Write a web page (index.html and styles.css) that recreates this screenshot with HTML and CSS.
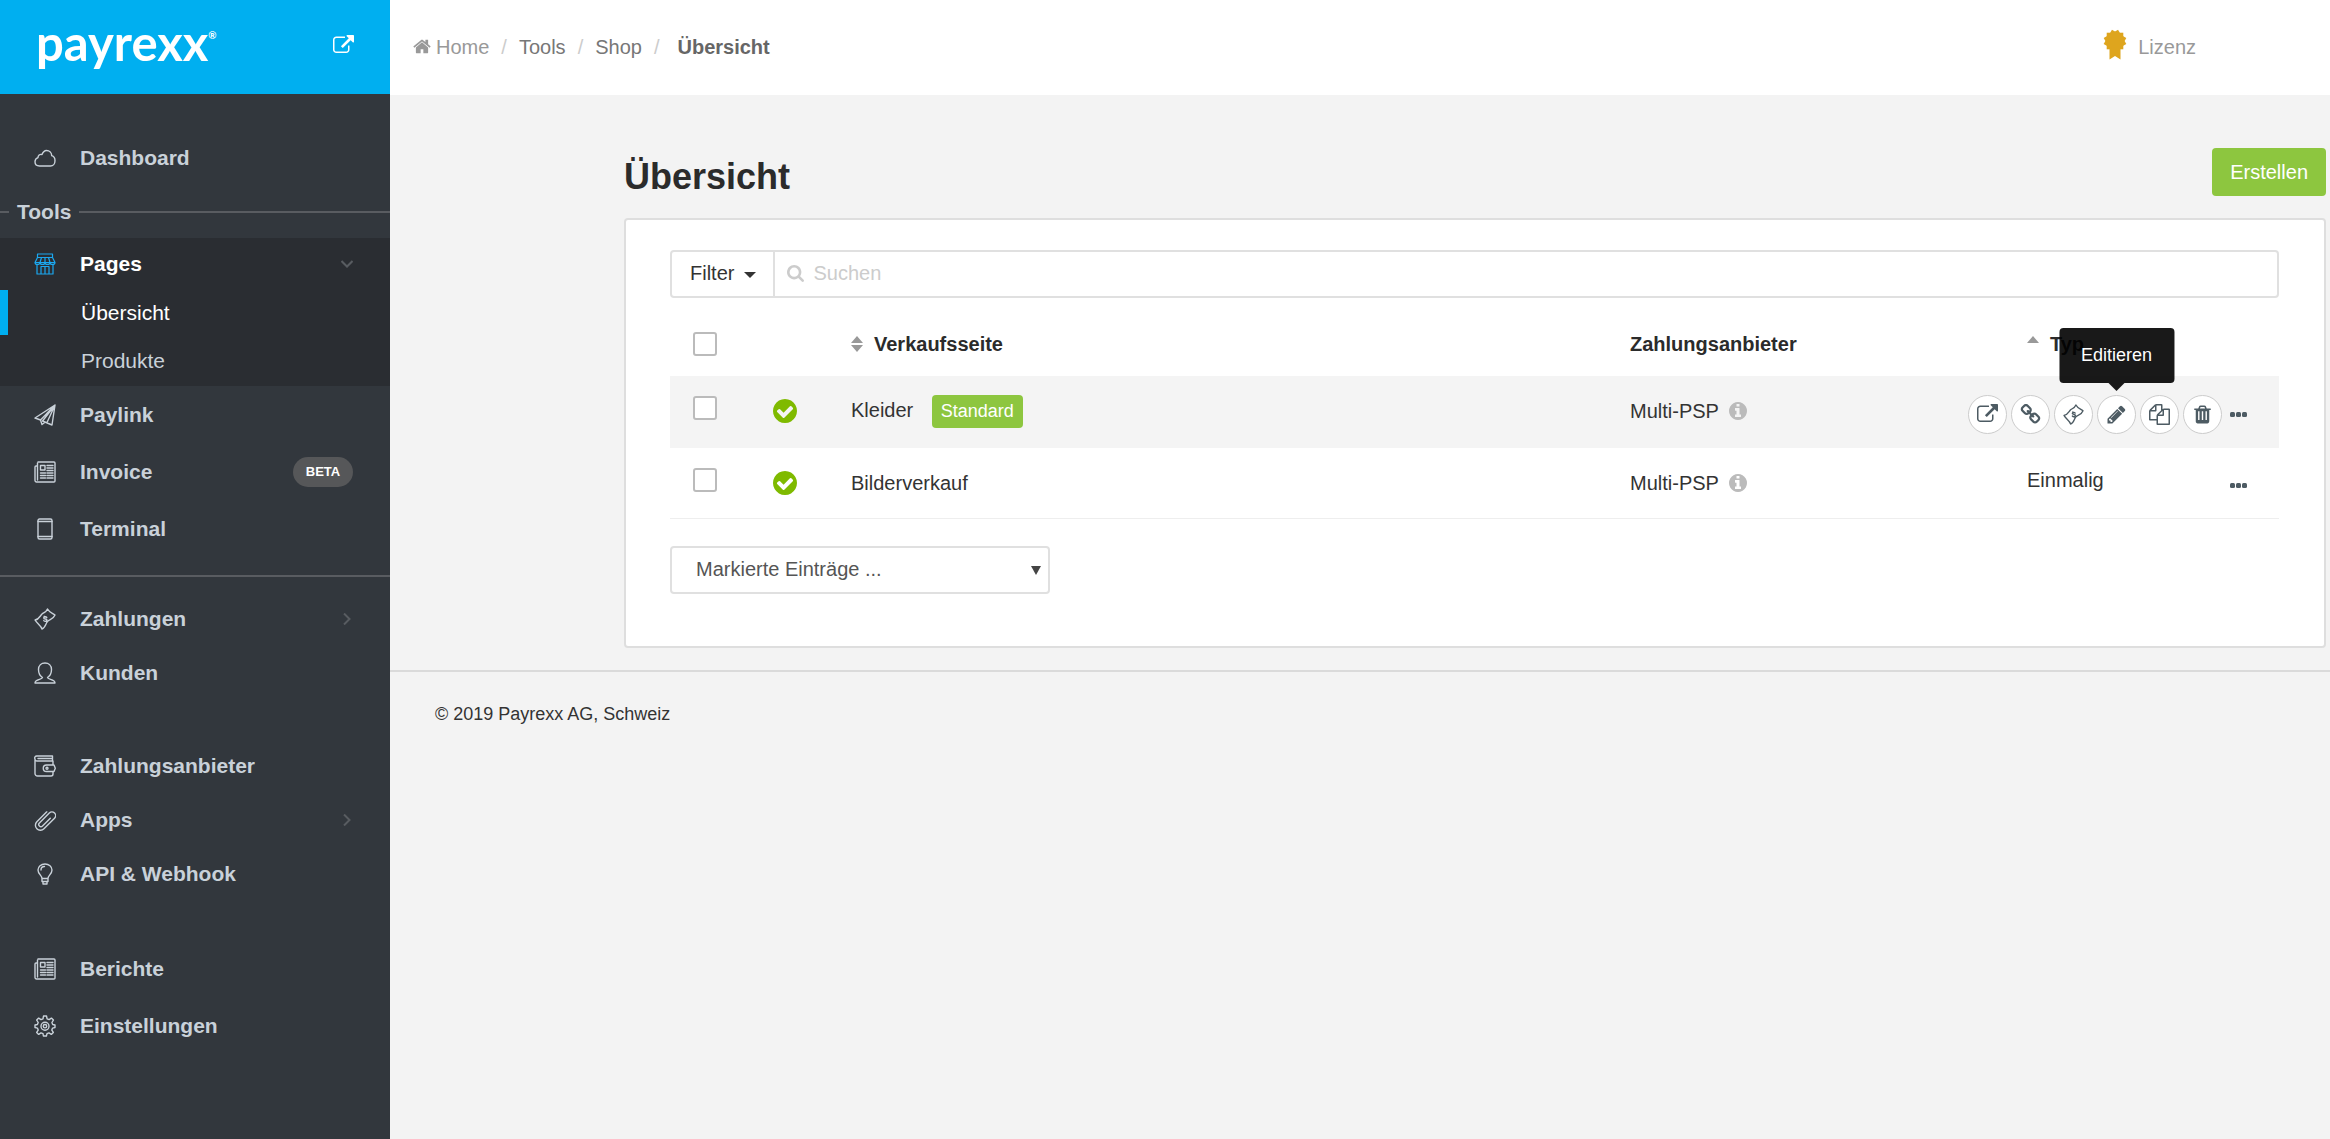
FILE: index.html
```
<!DOCTYPE html>
<html lang="de">
<head>
    <meta charset="UTF-8">
    <meta name="viewport" content="width=device-width, initial-scale=1.0">
    <title>Übersicht - Payrexx</title>
    <link rel="stylesheet" href="styles.css">
</head>
<body>
    <!-- shared icons -->
    <svg class="sprite" aria-hidden="true">
        <symbol id="i-external" viewBox="0 0 1792 1792"><path d="M1408 928v320q0 119-84.500 203.500t-203.500 84.500h-832q-119 0-203.500-84.500t-84.500-203.500v-832q0-119 84.500-203.500t203.500-84.500h704q14 0 23 9t9 23v64q0 14-9 23t-23 9h-704q-66 0-113 47t-47 113v832q0 66 47 113t113 47h832q66 0 113-47t47-113v-320q0-14 9-23t23-9h64q14 0 23 9t9 23zm384-864v512q0 26-19 45t-45 19-45-19l-176-176-652 652q-10 10-23 10t-23-10l-114-114q-10-10-10-23t10-23l652-652-176-176q-19-19-19-45t19-45 45-19h512q26 0 45 19t19 45z"/></symbol>
        <symbol id="i-check" viewBox="128 128 1536 1536"><path d="M1412 734q0-28-18-46l-91-90q-19-19-45-19t-45 19l-408 407-226-226q-19-19-45-19t-45 19l-91 90q-18 18-18 46 0 27 18 45l362 362q19 19 45 19 27 0 46-19l543-543q18-18 18-45zm252 162q0 209-103 385.500t-279.500 279.500-385.500 103-385.500-103-279.500-279.500-103-385.500 103-385.500 279.500-279.500 385.500-103 385.500 103 279.500 279.500 103 385.500z"/></symbol>
        <symbol id="i-info" viewBox="128 128 1536 1536"><path d="M1152 1376v-160q0-14-9-23t-23-9h-96v-512q0-14-9-23t-23-9h-320q-14 0-23 9t-9 23v160q0 14 9 23t23 9h96v320h-96q-14 0-23 9t-9 23v160q0 14 9 23t23 9h448q14 0 23-9t9-23zm-128-896v-160q0-14-9-23t-23-9h-192q-14 0-23 9t-9 23v160q0 14 9 23t23 9h192q14 0 23-9t9-23zm640 416q0 209-103 385.500t-279.500 279.500-385.500 103-385.500-103-279.500-279.500-103-385.500 103-385.500 279.500-279.500 385.500-103 385.500 103 279.500 279.500 103 385.500z"/></symbol>
        <symbol id="i-dots" viewBox="0 0 17 5"><rect width="5" height="5" rx="1.500"/><rect x="6" width="5" height="5" rx="1.500"/><rect x="12" width="5" height="5" rx="1.500"/></symbol>
        <symbol id="i-money" viewBox="0 0 22 22"><path d="M1 12C5 11.500 6 8 8 6c2-1.500 4-1.500 5.500-5C15 4 18 5 21 7c-2 5-6 4-8 7-1.500 3-2 6-5 7-1-3.500-4.500-5-7-9z"/><path d="M12.800 9.500c-1-1.300-3.300-.800-3 .600.300 1.300 3 .400 3.200 1.900.200 1.500-2.200 1.900-3.200.600M10.200 8.300l.600.800M12 13l.700.900"/></symbol>
        <symbol id="i-news" viewBox="0 0 22 22"><path d="M4 1h16a1 1 0 0 1 1 1v18a1 1 0 0 1-1 1H2.500A1.500 1.500 0 0 1 1 19.500V6a1 1 0 0 1 1-1h1.500V19M3.500 19V2"/><path d="M6.500 4.500h4.500v4.500h-4.500zM13 4.500h6M13 7h6M13 9.500h6M6.500 12h5M13 12h6M6.500 14.500h5M13 14.500h6M6.500 17h5M13 17h6"/></symbol>
        <symbol id="i-right" viewBox="0 0 12 12"><path d="M3 0.500L8.500 6 3 11.500"/></symbol>
    </svg>

    <div class="layout">
        <aside class="sidebar">
            <div class="brand">
                <a class="logo" href="#">payrexx<sup>®</sup></a>
                <a class="brand-link" href="#" aria-label="Seite öffnen"><svg class="fill"><use href="#i-external"/></svg></a>
            </div>
            <nav class="menu">
                <a class="item" href="#">
                    <svg class="line" viewBox="0 0 22 22"><path d="M16.500 19H5.500C2.800 19 1 17.200 1 14.800c0-2 1.300-3.600 3-4.200-.100-2 1.800-3.800 4-3C9 5 10.500 3.500 12.500 3.500c3 0 5.200 2.300 5.200 5.200 2 .600 3.300 2.600 3.300 5 0 3-2 5.300-4.500 5.300z"/></svg>
                    <span>Dashboard</span>
                </a>
                <h2 class="menu-title">Tools</h2>
                <div class="open">
                    <a class="item active" href="#">
                        <svg class="line" viewBox="0 0 22 22"><path d="M3.500 1h15v3.500h-15zM3.500 4.500L1 9.500h20l-2.500-5M7.500 4.500L6 9.500M11 4.500v5M14.500 4.500l1.500 5M1 9.500c0 2.600 5 2.600 5 0 0 2.600 5 2.600 5 0 0 2.600 5 2.600 5 0 0 2.600 5 2.600 5 0M3 11.500V21h16v-9.500M7 21v-7.500h8V21M11 13.500V21"/></svg>
                        <span>Pages</span>
                        <svg class="chevron" viewBox="0 0 12 12"><path d="M0.500 3L6 8.500 11.500 3"/></svg>
                    </a>
                    <a class="subitem current" href="#">Übersicht</a>
                    <a class="subitem" href="#">Produkte</a>
                </div>
                <div class="group wide">
                    <a class="item" href="#">
                        <svg class="line" viewBox="0 0 22 22"><path d="M21 1L1 14l5.500 2L21 1zM21 1L8.500 17l9.500 4L21 1zM6.500 16l1.500 4.500 3-2.300M21 1l-8 17.500"/></svg>
                        <span>Paylink</span>
                    </a>
                    <a class="item" href="#">
                        <svg class="line"><use href="#i-news"/></svg>
                        <span>Invoice</span>
                        <span class="beta">BETA</span>
                    </a>
                    <a class="item" href="#">
                        <svg class="line" viewBox="0 0 22 22"><rect x="4" y="1" width="14" height="20" rx="1.500"/><path d="M4 3.500h14M4 18.500h14"/></svg>
                        <span>Terminal</span>
                    </a>
                </div>
                <hr class="rule">
                <div class="group">
                    <a class="item" href="#">
                        <svg class="line"><use href="#i-money"/></svg>
                        <span>Zahlungen</span>
                        <svg class="chevron"><use href="#i-right"/></svg>
                    </a>
                    <a class="item" href="#">
                        <svg class="line" viewBox="0 0 22 22"><path d="M8.500 15.500C6 14 4.500 11 4.500 7.500 4.500 3.500 7.300 1 11 1s6.500 2.500 6.500 6.500c0 3.500-1.500 6.500-4 8 .200 2.300 7.500 1.500 7.500 5.500H1c0-4 7.300-3.200 7.500-5.500z"/></svg>
                        <span>Kunden</span>
                    </a>
                </div>
                <div class="group spaced">
                    <a class="item" href="#">
                        <svg class="line" viewBox="0 0 22 22"><path d="M19 10V6H3a2 2 0 0 1-2-2v14.500A2.500 2.500 0 0 0 3.500 21H17a2 2 0 0 0 2-2v-2.500M1 4a2 2 0 0 1 2-3h15.500v5M4 3.500h14.500M12.500 10H20l1.300 3.200L20 16.500h-7.500a3.200 3.200 0 0 1 0-6.500z"/><circle cx="13" cy="13.200" r="1"/></svg>
                        <span>Zahlungsanbieter</span>
                    </a>
                    <a class="item" href="#">
                        <svg class="line" viewBox="0 0 22 22"><g transform="rotate(45 11 11)"><path d="M13.500 6v11a2.200 2.200 0 0 1-4.400 0V3a3.700 3.700 0 0 1 7.400 0v15a5 5 0 0 1-10 0V4"/></g></svg>
                        <span>Apps</span>
                        <svg class="chevron"><use href="#i-right"/></svg>
                    </a>
                    <a class="item" href="#">
                        <svg class="line" viewBox="0 0 22 22"><path d="M8 15.500c0-3-4-4.500-4-8.500 0-3.500 3-6 7-6s7 2.500 7 6c0 4-4 5.500-4 8.500zM8 15.500v3h6v-3M9 18.500V21h4v-2.500M7 7c0-2 1.500-3.500 3.500-3.500"/></svg>
                        <span>API &amp; Webhook</span>
                    </a>
                </div>
                <div class="group spaced wide">
                    <a class="item" href="#">
                        <svg class="line"><use href="#i-news"/></svg>
                        <span>Berichte</span>
                    </a>
                    <a class="item" href="#">
                        <svg class="line" viewBox="0 0 22 22"><path d="M9.500 1h3l.600 2.800 2 .800 2.300-1.500 2 2-1.500 2.400.800 2L21 10v2.500l-2.400.600-.800 2 1.500 2.300-2 2-2.300-1.500-2 .800-.600 2.300h-3L9 18.700l-2-.800-2.300 1.500-2-2 1.500-2.300-.800-2L1 12.500V10l2.400-.500.800-2-1.500-2.400 2-2L7 4.600l2-.800z"/><circle cx="11" cy="11.200" r="4"/><circle cx="11" cy="11.200" r="1.700"/></svg>
                        <span>Einstellungen</span>
                    </a>
                </div>
            </nav>
        </aside>

        <div class="main">
            <header class="topbar">
                <ol class="breadcrumb">
                    <li><a class="home" href="#"><svg class="fill" viewBox="50 200 1692 1400"><path d="M1472 992v480q0 26-19 45t-45 19h-384v-384h-256v384h-384q-26 0-45-19t-19-45v-480q0-1 .500-3t.500-3l575-474 575 474q1 2 1 6zm223-69l-62 74q-8 9-21 11h-3q-13 0-21-7l-692-577-692 577q-12 8-24 7-13-2-21-11l-62-74q-8-10-7-23.500t11-21.500l719-599q32-26 76-26t76 26l244 204v-195q0-14 9-23t23-9h192q14 0 23 9t9 23v408l219 182q10 8 11 21.500t-7 23.500z"/></svg>Home</a></li>
                    <li><a href="#">Tools</a></li>
                    <li><a href="#">Shop</a></li>
                    <li class="here">Übersicht</li>
                </ol>
                <a class="license" href="#">
                    <svg viewBox="0 0 24 31"><g transform="translate(12 12)"><path id="burst" d="M-8.300-8.300H8.300V8.300H-8.300z"/><use href="#burst" transform="rotate(30)"/><use href="#burst" transform="rotate(60)"/></g><path d="M6.500 18v12.500l5.500-3.500 5.500 3.500V18z"/></svg>
                    Lizenz
                </a>
            </header>

            <main class="content">
                <div class="heading">
                    <h1>Übersicht</h1>
                    <button class="create" type="button">Erstellen</button>
                </div>

                <section class="card">
                    <div class="filterbar">
                        <button class="filter" type="button">Filter <span class="caret"></span></button>
                        <label class="search">
                            <svg class="fill" viewBox="64 128 1664 1664"><path d="M1216 832q0-185-131.500-316.500t-316.500-131.500-316.500 131.500-131.500 316.500 131.500 316.500 316.500 131.500 316.500-131.500 131.500-316.500zm512 832q0 52-38 90t-90 38q-54 0-90-38l-343-342q-179 124-399 124-143 0-273.500-55.500t-225-150-150-225-55.500-273.500 55.500-273.500 150-225 225-150 273.500-55.500 273.500 55.500 225 150 150 225 55.500 273.500q0 220-124 399l343 343q37 37 37 90z"/></svg>
                            <input type="text" placeholder="Suchen" aria-label="Suchen">
                        </label>
                    </div>

                    <table class="list">
                        <thead>
                            <tr>
                                <th class="col-check"><input type="checkbox" aria-label="Alle markieren"></th>
                                <th class="col-status"></th>
                                <th><span class="sort"><svg viewBox="0 0 12 16"><path d="M6 0l6 7H0zM0 9h12l-6 7z"/></svg>Verkaufsseite</span></th>
                                <th class="col-psp">Zahlungsanbieter</th>
                                <th class="col-type"><span class="sort"><svg viewBox="0 0 12 16"><path d="M6 0l6 7H0z"/></svg>Typ</span></th>
                                <th class="col-menu"></th>
                            </tr>
                        </thead>
                        <tbody>
                            <tr class="hover">
                                <td class="col-check"><input type="checkbox" aria-label="Kleider markieren"></td>
                                <td><svg class="status"><use href="#i-check"/></svg></td>
                                <td>Kleider <span class="tag">Standard</span></td>
                                <td>Multi-PSP <svg class="info"><use href="#i-info"/></svg></td>
                                <td class="col-menu" colspan="2">
                                    <div class="actions">
                                        <button class="round" type="button" aria-label="Öffnen"><svg class="fill"><use href="#i-external"/></svg></button>
                                        <button class="round" type="button" aria-label="Link"><svg class="fill" viewBox="20 20 1752 1752"><path d="M1520 1216q0-40-28-68l-208-208q-28-28-68-28-42 0-72 32 3 3 19 18.500t21.500 21.500 15 19 13 25.500 3.500 27.500q0 40-28 68t-68 28q-15 0-27.500-3.500t-25.500-13-19-15-21.500-21.500-18.500-19q-33 31-33 73 0 40 28 68l206 207q27 27 68 27 40 0 68-26l147-146q28-28 28-67zm-703-705q0-40-28-68l-206-207q-28-28-68-28-39 0-68 27l-147 146q-28 28-28 67 0 40 28 68l208 208q27 27 68 27 42 0 72-31-3-3-19-18.500t-21.500-21.500-15-19-13-25.500-3.500-27.500q0-40 28-68t68-28q15 0 27.500 3.500t25.500 13 19 15 21.500 21.500 18.500 19q33-31 33-73zm895 705q0 120-85 203l-147 146q-83 83-203 83-121 0-204-85l-206-207q-83-83-83-203 0-123 88-209l-88-88q-86 88-208 88-120 0-204-84l-208-208q-84-84-84-204t85-203l147-146q83-83 203-83 121 0 204 85l206 207q83 83 83 203 0 123-88 209l88 88q86-88 208-88 120 0 204 84l208 208q84 84 84 204z"/></svg></button>
                                        <button class="round" type="button" aria-label="Zahlungen"><svg class="line"><use href="#i-money"/></svg></button>
                                        <button class="round" type="button" aria-label="Editieren">
                                            <svg class="fill" viewBox="0 0 1792 1792"><path d="M491 1536l91-91-235-235-91 91v107h128v128h107zm523-928q0-22-22-22-10 0-17 7l-542 542q-7 7-7 17 0 22 22 22 10 0 17-7l542-542q7-7 7-17zm-54-192l416 416-832 832h-416v-416zm683 96q0 53-37 90l-166 166-416-416 166-165q36-38 90-38 53 0 91 38l235 234q37 39 37 91z"/></svg>
                                            <span class="tooltip" role="tooltip">Editieren</span>
                                        </button>
                                        <button class="round" type="button" aria-label="Kopieren"><svg class="fill" viewBox="0 0 1792 1792"><path d="M1696 384q40 0 68 28t28 68v1216q0 40-28 68t-68 28h-960q-40 0-68-28t-28-68v-288h-544q-40 0-68-28t-28-68v-672q0-40 20-88t48-76l408-408q28-28 76-48t88-20h416q40 0 68 28t28 68v328q68-40 128-40h416zm-544 213l-299 299h299v-299zm-640-384l-299 299h299v-299zm196 647l316-316v-416h-384v416q0 40-28 68t-68 28h-416v640h512v-256q0-40 20-88t48-76zm956 804v-1152h-384v416q0 40-28 68t-68 28h-416v640h896z"/></svg></button>
                                        <button class="round" type="button" aria-label="Löschen"><svg class="fill" viewBox="0 0 1792 1792"><path fill-rule="evenodd" d="M520 610h120v760H520zM836 610h120v760H836zM1152 610h120v760h-120zM672 384h448l-48-117q-7-9-17-11h-317q-10 2-17 11zM1600 416v64q0 14-9 23t-23 9h-96v948q0 83-47 143.500t-113 60.500h-832q-66 0-113-58.500t-47-141.500v-952h-96q-14 0-23-9t-9-23v-64q0-14 9-23t23-9h309l70-167q15-37 54-63t79-26h320q40 0 79 26t54 63l70 167h309q14 0 23 9t9 23z"/></svg></button>
                                        <button class="more" type="button" aria-label="Mehr"><svg><use href="#i-dots"/></svg></button>
                                    </div>
                                </td>
                            </tr>
                            <tr>
                                <td class="col-check"><input type="checkbox" aria-label="Bilderverkauf markieren"></td>
                                <td><svg class="status"><use href="#i-check"/></svg></td>
                                <td>Bilderverkauf</td>
                                <td>Multi-PSP <svg class="info"><use href="#i-info"/></svg></td>
                                <td class="col-type">Einmalig</td>
                                <td class="col-menu">
                                    <div class="actions">
                                        <button class="more" type="button" aria-label="Mehr"><svg><use href="#i-dots"/></svg></button>
                                    </div>
                                </td>
                            </tr>
                        </tbody>
                    </table>

                    <div class="bulk">
                        <select aria-label="Markierte Einträge">
                            <option>Markierte Einträge ...</option>
                        </select>
                        <svg viewBox="0 0 10 9"><path d="M0 0h10L5 9z"/></svg>
                    </div>
                </section>
            </main>

            <footer class="footer">© 2019 Payrexx AG, Schweiz</footer>
        </div>
    </div>
</body>
</html>
```
FILE: styles.css
```
* {
    margin: 0;
    padding: 0;
    box-sizing: border-box;
}

body {
    font-family: "Liberation Sans", Arial, sans-serif;
    font-size: 20px;
    line-height: 24px;
    color: #333;
    background-color: #f3f3f3;
}

a {
    color: inherit;
    text-decoration: none;
}

button,
input,
select {
    font: inherit;
    color: inherit;
}

button {
    cursor: pointer;
}

.sprite {
    position: absolute;
    width: 0;
    height: 0;
}

.fill {
    fill: currentColor;
}

.line {
    fill: none;
    stroke: currentColor;
    stroke-width: 1.4;
    stroke-linejoin: round;
    stroke-linecap: round;
}

.layout {
    display: flex;
    min-height: 100vh;
}

/* sidebar */

.sidebar {
    flex: 0 0 390px;
    font-size: 21px;
    color: #c9d1d9;
    background-color: #32373d;
}

.brand {
    display: flex;
    justify-content: space-between;
    align-items: center;
    height: 94px;
    padding: 0 36px 4px;
    color: #fff;
    background-color: #00aff0;
}

.logo {
    padding-bottom: 6px;
    font-family: Lato, sans-serif;
    font-size: 49px;
    font-weight: bold;
    line-height: 60px;
}

.logo sup {
    font-size: 10px;
    line-height: 10px;
    vertical-align: 22px;
}

.brand-link svg {
    display: block;
    width: 21px;
    height: 21px;
}

.menu {
    padding-top: 37px;
}

.item {
    display: flex;
    align-items: center;
    gap: 24px;
    height: 54px;
    padding: 0 37px 0 34px;
    font-weight: bold;
}

.item .line {
    width: 22px;
    height: 22px;
}

.wide .item {
    height: 57px;
}

.menu-title {
    display: flex;
    align-items: center;
    gap: 8px;
    height: 53px;
    font-size: 21px;
}

.menu-title::before,
.menu-title::after {
    content: "";
    width: 9px;
    height: 2px;
    background-color: #595c61;
}

.menu-title::after {
    flex: 1;
}

.open {
    display: flow-root;
    background-color: #2a2d32;
}

.open .item {
    height: 52px;
}

.active {
    color: #fff;
}

.active .line {
    color: #1ba8f0;
    stroke-width: 1.2;
}

.chevron {
    width: 12px;
    height: 12px;
    margin-left: auto;
    fill: none;
    stroke: #585c61;
    stroke-width: 2;
}

.subitem {
    display: block;
    margin-bottom: 3px;
    padding-left: 81px;
    line-height: 45px;
}

.current {
    padding-left: 73px;
    color: #fff;
    border-left: 8px solid #00aff0;
}

.beta {
    width: 60px;
    margin-left: auto;
    border-radius: 15px;
    font-size: 13px;
    line-height: 30px;
    text-align: center;
    color: #fff;
    background-color: #565759;
}

.rule {
    height: 2px;
    margin: 18px 0 15px;
    border: none;
    background-color: #595c61;
}

.spaced {
    margin-top: 39px;
}

/* top bar */

.main {
    flex: 1;
    min-width: 0;
}

.topbar {
    display: flex;
    justify-content: space-between;
    align-items: center;
    height: 95px;
    padding: 0 134px 2px 23px;
    color: #999;
    background-color: #fff;
}

.breadcrumb {
    display: flex;
    list-style: none;
    color: #777;
}

.breadcrumb li + li::before {
    content: "/";
    padding: 0 12px;
    font-weight: normal;
    color: #ccc;
}

.breadcrumb .here::before {
    padding-right: 18px;
}

.home {
    color: #999;
}

.home svg {
    width: 18px;
    height: 15px;
    margin-right: 5px;
}

.here {
    font-weight: bold;
    color: #666;
}

.license {
    display: flex;
    align-items: center;
    gap: 11px;
}

.license svg {
    width: 24px;
    height: 31px;
    margin-bottom: 4px;
    fill: #dea51e;
}

/* content */

.content {
    padding: 53px 4px 22px 234px;
}

.heading {
    display: flex;
    justify-content: space-between;
    align-items: flex-end;
    margin-bottom: 22px;
}

h1 {
    font-size: 36px;
    line-height: 38px;
    color: #2b2b2b;
}

.create {
    height: 48px;
    padding: 0 18px;
    border: none;
    border-radius: 4px;
    color: #fff;
    background-color: #8dc63f;
}

.card {
    padding: 30px 45px 52px 44px;
    border: 2px solid #dedede;
    border-radius: 4px;
    background-color: #fff;
}

.filterbar {
    display: flex;
    height: 48px;
    border: 2px solid #e0e0e0;
    border-radius: 4px;
}

.filter {
    display: flex;
    align-items: center;
    gap: 10px;
    padding: 0 17px 2px 18px;
    border: none;
    border-right: 2px solid #e0e0e0;
    background: none;
}

.caret {
    margin-top: 4px;
    border: 6px solid transparent;
    border-top-color: #333;
    border-bottom: none;
}

.search {
    display: flex;
    flex: 1;
    align-items: center;
    gap: 9px;
    padding-left: 12px;
    padding-bottom: 2px;
}

.search svg {
    width: 17px;
    height: 17px;
    color: #ccc;
}

.search input {
    flex: 1;
    border: none;
    outline: none;
}

.search input::placeholder {
    color: #ccc;
}

/* list */

.list {
    width: 100%;
    margin-top: 14px;
    border-collapse: collapse;
    table-layout: fixed;
}

.list th {
    height: 64px;
    text-align: left;
    color: #2b2b2b;
}

.list td {
    height: 71px;
    border-bottom: 1px solid #eee;
}

.list .hover td {
    border-color: #f4f4f4;
    background-color: #f4f4f4;
}

.list .col-check {
    width: 103px;
    padding-left: 23px;
}

.col-status {
    width: 78px;
}

.col-psp {
    width: 397px;
}

.col-type {
    width: 151px;
}

.list .col-menu {
    width: 101px;
    padding-right: 32px;
}

.list td.col-check,
.list td.col-type {
    padding-bottom: 6px;
}

.list td.col-menu {
    padding-top: 6px;
}

.list input {
    display: block;
    appearance: none;
    width: 24px;
    height: 24px;
    border: 2px solid #bbb;
    border-radius: 3px;
    background-color: #fff;
}

.sort {
    display: flex;
    align-items: center;
    gap: 11px;
}

.sort svg {
    width: 12px;
    height: 16px;
    fill: #999;
}

.status {
    display: block;
    width: 24px;
    height: 24px;
    fill: #7fba00;
}

.tag {
    display: inline-block;
    margin-left: 13px;
    padding: 0 9px;
    border-radius: 4px;
    font-size: 18px;
    line-height: 33px;
    color: #fff;
    background-color: #8dc63f;
}

.info {
    width: 18px;
    height: 18px;
    margin-left: 5px;
    vertical-align: -2px;
    fill: #bbb;
}

.actions {
    display: flex;
    justify-content: flex-end;
    align-items: center;
    gap: 4px;
    color: #4d5b63;
}

.round {
    position: relative;
    display: flex;
    flex: 0 0 39px;
    justify-content: center;
    align-items: center;
    height: 39px;
    border: 1px solid #ccc;
    border-radius: 50%;
    background-color: #fff;
}

.round svg {
    width: 21px;
    height: 21px;
}

.more {
    padding: 6px 0 6px 4px;
    border: none;
    background: none;
}

.more svg {
    display: block;
    width: 17px;
    height: 5px;
    fill: currentColor;
}

.tooltip {
    position: absolute;
    bottom: 50px;
    left: 50%;
    padding: 0 22px;
    border-radius: 4px;
    font-size: 18px;
    line-height: 55px;
    color: #fff;
    background-color: rgba(0, 0, 0, 0.9);
    transform: translateX(-50%);
}

.tooltip::after {
    content: "";
    position: absolute;
    top: 100%;
    left: 50%;
    margin-left: -8px;
    border: 8px solid transparent;
    border-top-color: rgba(0, 0, 0, 0.9);
    border-bottom: none;
}

.bulk {
    position: relative;
    width: 380px;
    margin-top: 27px;
}

.bulk select {
    appearance: none;
    display: block;
    width: 100%;
    height: 48px;
    padding: 0 24px 2px;
    border: 2px solid #e0e0e0;
    border-radius: 4px;
    color: #555;
    background-color: #fff;
}

.bulk svg {
    position: absolute;
    top: 20px;
    right: 9px;
    width: 10px;
    height: 9px;
    fill: #444;
    pointer-events: none;
}

.footer {
    padding: 30px 45px;
    border-top: 2px solid #dadada;
    font-size: 18px;
}
```
